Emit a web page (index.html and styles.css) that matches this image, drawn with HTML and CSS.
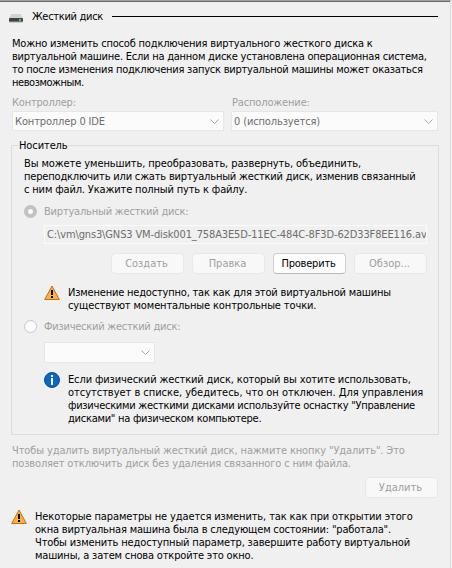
FILE: index.html
```html
<!DOCTYPE html>
<html lang="ru">
<head>
<meta charset="utf-8">
<title>Жесткий диск</title>
<link rel="stylesheet" href="styles.css">
</head>
<body>
<main class="page">
  <header class="head">
    <svg class="disk" width="14" height="9" viewBox="0 0 14 9"><path d="M2.5 0h9L14 4H0z" fill="#d2d2d2"/><rect y="4" width="14" height="4" rx="1" fill="#3d4246"/><rect y="7.5" width="14" height="1" fill="#aaa"/><rect x="10" y="5" width="2" height="2" fill="#2be03a"/></svg>
    <h1 class="title"><span class="t1">Жесткий диск</span></h1>
    <span class="rule"></span>
  </header>
  <p class="intro"><span class="a1">Можно изменить способ подключения виртуального жесткого диска к</span><span class="a2">виртуальной машине. Если на данном диске установлена операционная система,</span><span class="a3">то после изменения подключения запуск виртуальной машины может оказаться</span><span class="a4">невозможным.</span></p>
  <div class="fields">
    <div class="field"><label class="dim"><span class="l1">Контроллер:</span></label><div class="combo"><span class="c1">Контроллер 0 IDE</span><svg class="chev" width="9" height="5" viewBox="0 0 9 5"><path d="M.5.5l4 4 4-4"/></svg></div></div>
    <div class="field"><label class="dim"><span class="l2">Расположение:</span></label><div class="combo"><span class="c2">0 (используется)</span><svg class="chev" width="9" height="5" viewBox="0 0 9 5"><path d="M.5.5l4 4 4-4"/></svg></div></div>
  </div>
  <section class="group">
    <h2 class="legend"><span class="g0">Носитель</span></h2>
    <p class="desc"><span class="g1">Вы можете уменьшить, преобразовать, развернуть, объединить,</span><span class="g2">переподключить или сжать виртуальный жесткий диск, изменив связанный</span><span class="g3">с ним файл. Укажите полный путь к файлу.</span></p>
    <div class="option first"><i class="radio on"></i><span class="o1">Виртуальный жесткий диск:</span></div>
    <div class="path"><span class="pt">C:\vm\gns3\GNS3 VM-disk001_758A3E5D-11EC-484C-8F3D-62D33F8EE116.av</span></div>
    <div class="buttons"><button class="btn" disabled><span class="b1">Создать</span></button><button class="btn" disabled><span class="b2">Правка</span></button><button class="btn"><span class="b3">Проверить</span></button><button class="btn" disabled><span class="b4">Обзор...</span></button></div>
    <div class="note warn"><svg width="16" height="16" viewBox="0 0 16 16"><path d="M8 1L15.3 14.5H.7z" class="tri"/><path d="M7 5h2v5H7zM7 11h2v2H7z"/></svg><p><span class="w1">Изменение недоступно, так как для этой виртуальной машины</span><span class="w2">существуют моментальные контрольные точки.</span></p></div>
    <div class="option second"><i class="radio"></i><span class="o2">Физический жесткий диск:</span></div>
    <div class="combo small"><span></span><svg class="chev" width="9" height="5" viewBox="0 0 9 5"><path d="M.5.5l4 4 4-4"/></svg></div>
    <div class="note info"><svg width="16" height="16" viewBox="0 0 16 16"><circle cx="8" cy="8" r="7.5" fill="#0868c4" stroke="#064f9c"/><path d="M7 3h2v2H7zM7 6h2v7H7z" fill="#fff"/></svg><p><span class="i1">Если физический жесткий диск, который вы хотите использовать,</span><span class="i2">отсутствует в списке, убедитесь, что он отключен. Для управления</span><span class="i3">физическими жесткими дисками используйте оснастку "Управление</span><span class="i4">дисками" на физическом компьютере.</span></p></div>
  </section>
  <p class="remove dim"><span class="r1">Чтобы удалить виртуальный жесткий диск, нажмите кнопку "Удалить". Это</span><span class="r2">позволяет отключить диск без удаления связанного с ним файла.</span></p>
  <div class="actions"><button class="btn" disabled><span class="b5">Удалить</span></button></div>
  <div class="note foot"><svg width="16" height="16" viewBox="0 0 16 16"><path d="M8 1L15.3 14.5H.7z" class="tri"/><path d="M7 5h2v5H7zM7 11h2v2H7z"/></svg><p><span class="f1">Некоторые параметры не удается изменить, так как при открытии этого</span><span class="f2">окна виртуальная машина была в следующем состоянии: "работала".</span><span class="f3">Чтобы изменить недоступный параметр, завершите работу виртуальной</span><span class="f4">машины, а затем снова откройте это окно.</span></p></div>
</main>
</body>
</html>
```

FILE: styles.css
```css
* { box-sizing: border-box; }
body { margin: 0; background: #f0f0f0; }
.page { width: 451px; height: 568px; padding: 8px 12px 0 11px; overflow: hidden; border-top: 1px solid #a0a0a0; border-right: 1px solid #dcdcdc; box-shadow: inset 0 1px #696969; font: 11px/13px "DejaVu Sans Condensed", "DejaVu Sans", sans-serif; font-stretch: condensed; color: #000; white-space: nowrap; }
h1, h2, p { margin: 0; font: inherit; font-stretch: condensed; }
p > span { display: block; }
.head { display: flex; align-items: center; height: 15px; }
.disk { margin: 4px 9px 0 -2px; }
.title { width: 73px; margin-right: 7px; }
.rule { flex: 1; height: 1px; background: #000; }
.intro { padding: 13px 0 0 1px; }
.fields { display: flex; gap: 7px; margin-top: 7px; }
.field { width: 213px; padding-left: 1px; }
.field + .field { width: 207px; padding: 0; }
.field label { display: block; height: 13px; }
.field + .field label { padding-left: 1px; }
.dim { color: #9f9f9f; }
.combo { display: flex; align-items: center; justify-content: space-between; height: 20px; margin-top: 2px; padding: 0 4px 0 2px; background: #fbfbfb; border: 1px solid #e6e6e6; color: #6d6d6d; }
.chev { fill: none; stroke: #a6a6a6; }
.group { width: 428px; height: 290px; margin-top: 14px; border: 1px solid #dcdcdc; padding: 0 11px 0 12px; }
.legend { width: 50px; height: 13px; margin: -7px 0 0 -6px; padding-left: 1px; background: #f0f0f0; }
.desc { margin-top: 5px; }
.option { display: flex; align-items: center; gap: 7px; height: 13px; color: #9f9f9f; }
.first { margin-top: 9px; }
.radio { width: 13px; height: 13px; border: 1px solid #c8c8c8; border-radius: 50%; background: #fbfbfb; }
.radio.on { border: 4px solid #c2c2c2; }
.path { height: 19px; margin: 7px 0 0 20px; padding: 2px 0 0 2px; border: 1px solid #fbfbfb; color: #6d6d6d; overflow: hidden; }
.buttons { display: flex; justify-content: flex-end; gap: 8px; margin-top: 9px; }
.btn { width: 73px; height: 21px; padding: 0 2px 0 0; border: 1px solid #d0d0d0; border-bottom-color: #b8b8b8; border-radius: 4px; background: #fdfdfd; color: #000; font: inherit; font-stretch: condensed; }
.btn:disabled { border-color: #e8e8e8; background: #f8f8f8; color: #9f9f9f; }
.note { display: flex; gap: 8px; }
.note svg { flex: none; }
.note p { padding-top: 1px; }
.tri { fill: #fcb040; stroke: #b8740f; stroke-linejoin: round; }
.warn { margin: 11px 0 0 20px; }
.second { margin-top: 8px; }
.small { width: 111px; height: 21px; margin: 9px 0 0 20px; }
.info { margin: 9px 0 0 20px; }
.remove { margin: 9px 0 0 1px; }
.actions { display: flex; justify-content: flex-end; margin-top: 7px; }
.foot { margin-top: 11px; }

/* Tracking per line */
.t1 { letter-spacing: -.3px; }
.a1 { letter-spacing: -.19px; }
.a2, .a3 { letter-spacing: -.23px; }
.a4 { letter-spacing: -.45px; }
.l1 { letter-spacing: -.2px; }
.l2 { letter-spacing: -.15px; }
.c1, .c2 { letter-spacing: -.13px; }
.g0, .g1 { letter-spacing: -.1px; }
.g2 { letter-spacing: -.18px; }
.g3 { letter-spacing: -.15px; }
.o1 { letter-spacing: -.2px; }
.o2 { letter-spacing: -.25px; }
.pt { letter-spacing: -.13px; }
.b3 { letter-spacing: -.2px; }
.w1 { letter-spacing: -.19px; }
.w2 { letter-spacing: -.12px; }
.i1 { letter-spacing: -.13px; }
.i2 { letter-spacing: -.03px; }
.i3, .i4 { letter-spacing: -.26px; }
.r1 { letter-spacing: -.12px; }
.r2 { letter-spacing: -.16px; }
.f1 { letter-spacing: -.12px; }
.f2 { letter-spacing: -.18px; }
.f3 { letter-spacing: -.15px; }
.f4 { letter-spacing: -.17px; }
```
